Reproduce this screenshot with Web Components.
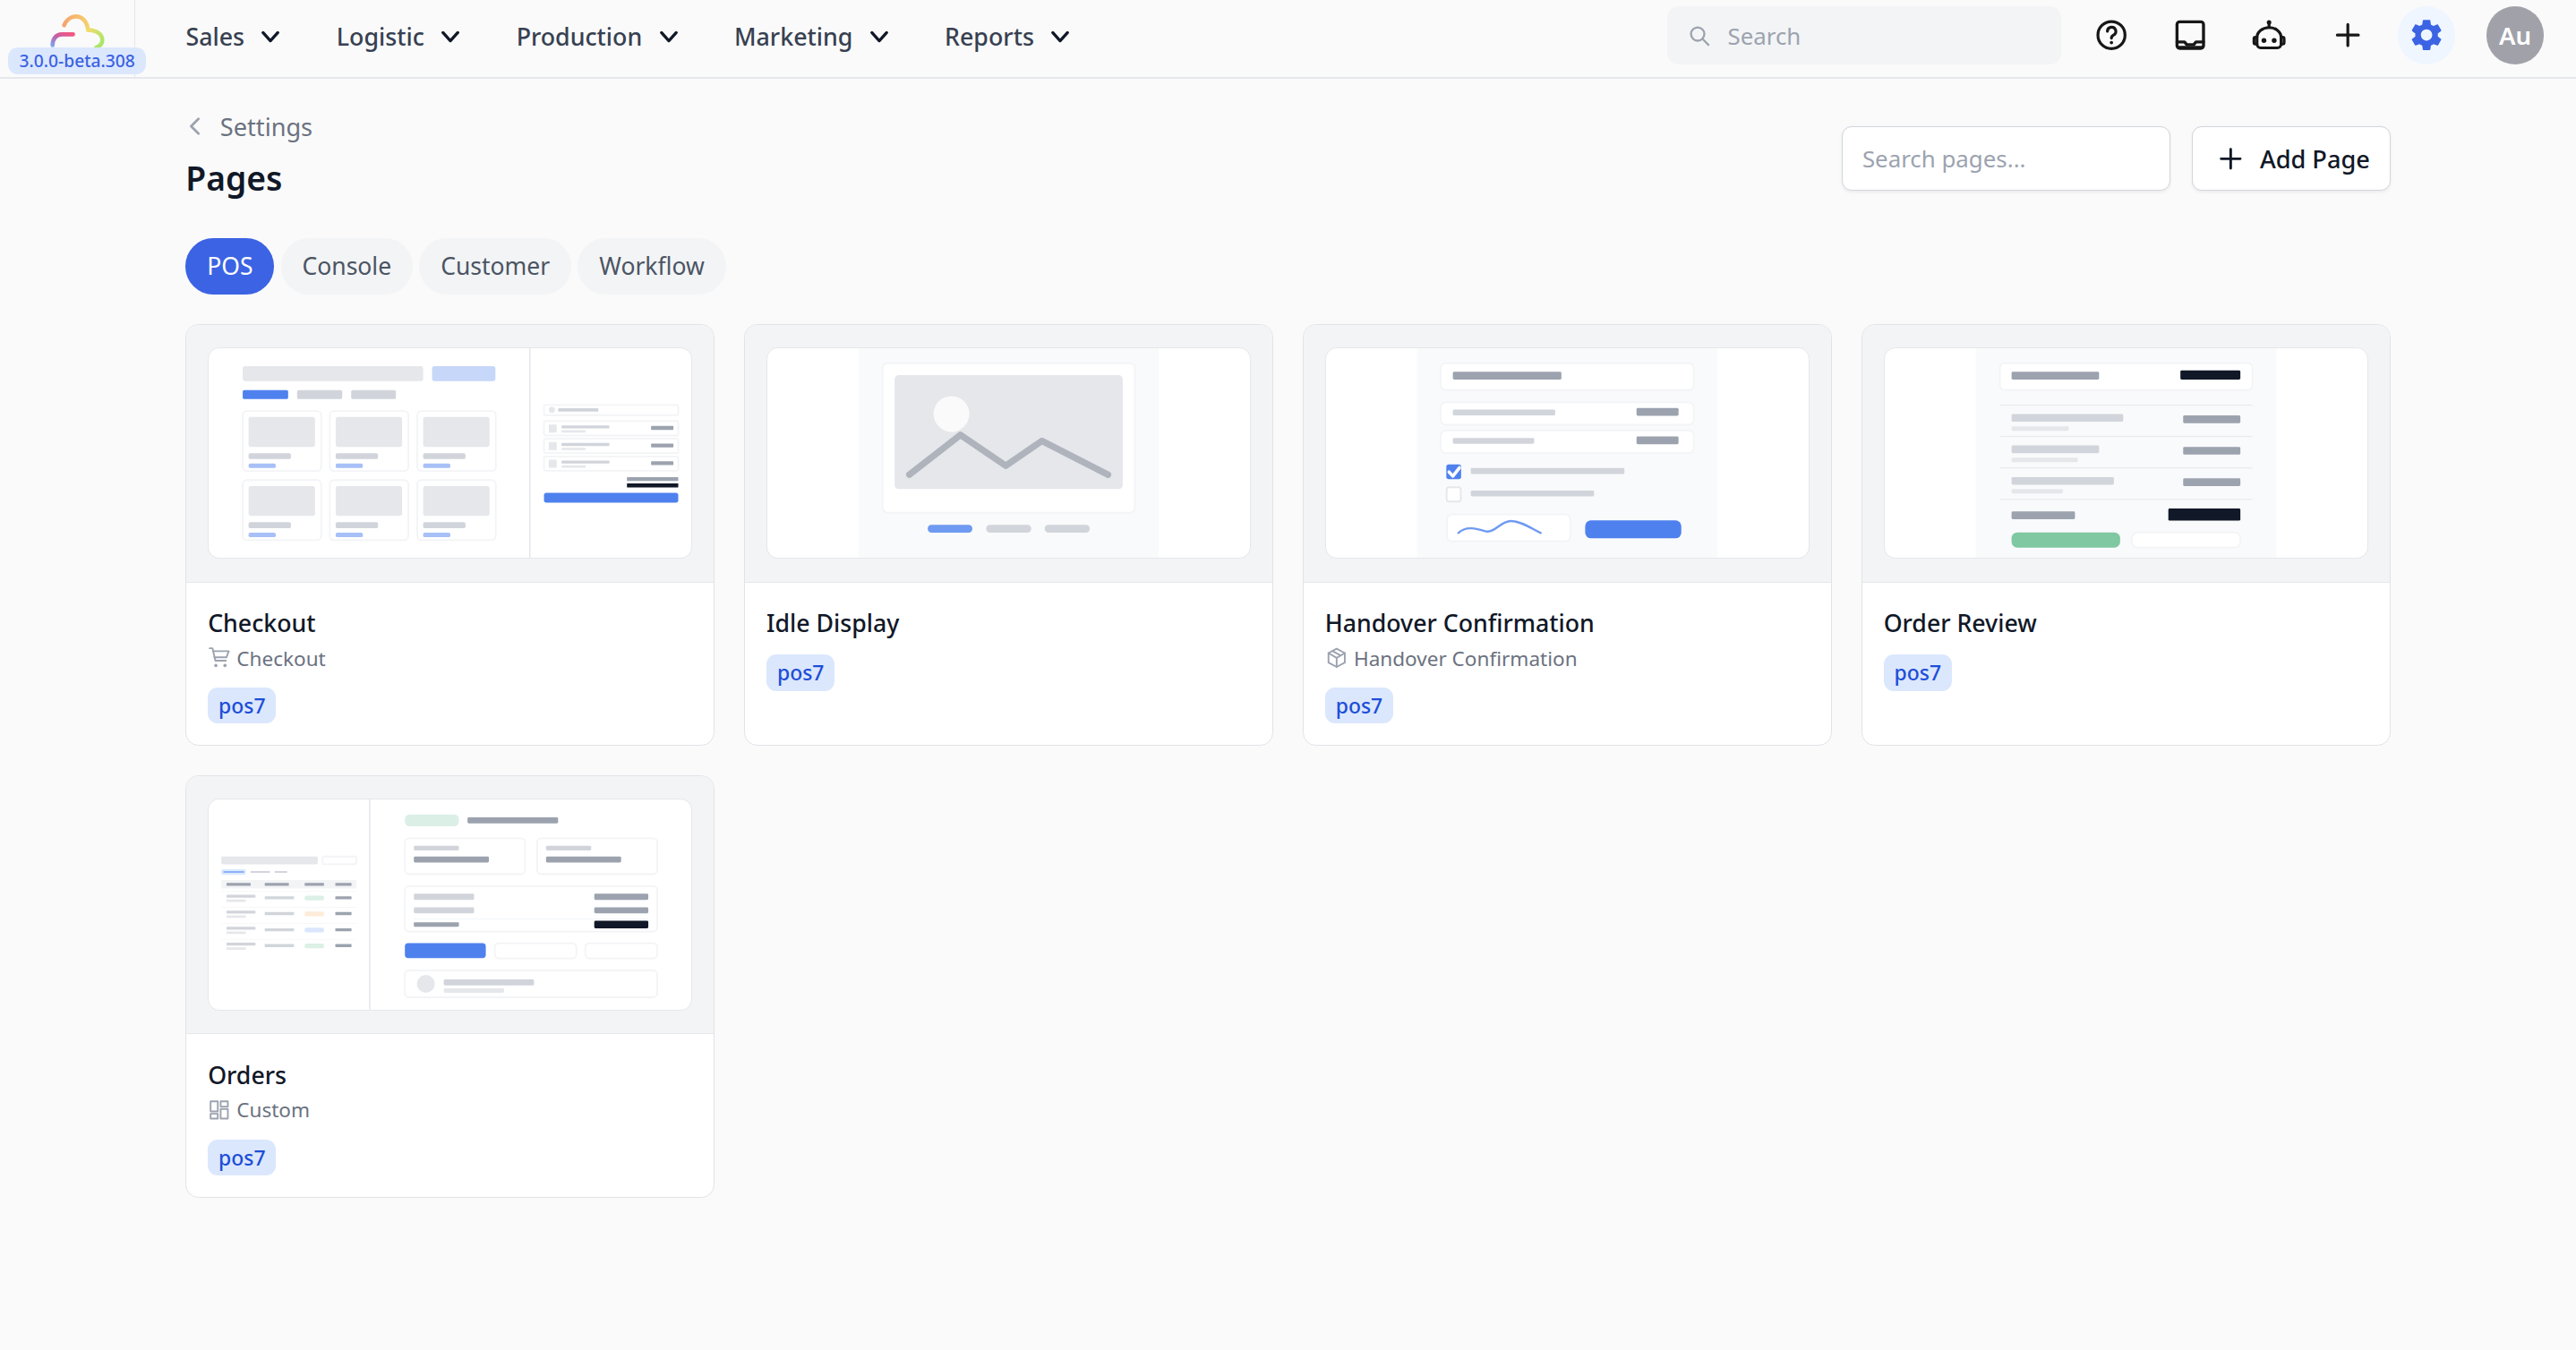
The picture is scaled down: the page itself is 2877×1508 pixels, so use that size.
<!DOCTYPE html>
<html lang="en">
<head>
<meta charset="utf-8">
<title>Pages</title>
<style>
  html { zoom: 1.8348; }
  body {
    margin: 0;
    background: #fafafa;
    color: #111827;
    font-family: "Noto Sans", "Liberation Sans", sans-serif;
  }
</style>
</head>
<body>
<app-header>
  <nav-item>Sales</nav-item>
  <nav-item>Logistic</nav-item>
  <nav-item>Production</nav-item>
  <nav-item>Marketing</nav-item>
  <nav-item>Reports</nav-item>
</app-header>
<pages-view>
  <tab-pill active>POS</tab-pill>
  <tab-pill>Console</tab-pill>
  <tab-pill>Customer</tab-pill>
  <tab-pill>Workflow</tab-pill>
  <page-card slot="cards" name="Checkout" sub="Checkout" icon="cart" kind="checkout">pos7</page-card>
  <page-card slot="cards" name="Idle Display" kind="idle">pos7</page-card>
  <page-card slot="cards" name="Handover Confirmation" sub="Handover Confirmation" icon="box" kind="handover">pos7</page-card>
  <page-card slot="cards" name="Order Review" kind="review">pos7</page-card>
  <page-card slot="cards" name="Orders" sub="Custom" icon="grid" kind="orders">pos7</page-card>
</pages-view>

<script>
const ICONS = {
  help: '<circle cx="12" cy="12" r="9"/><path d="M9.300 9.500a2.800 2.800 0 1 1 4.100 2.500c-.9.5-1.400 1-1.400 2"/><circle cx="12" cy="17" r="1.100" fill="currentColor" stroke="none"/>',
  inbox: '<rect x="3.200" y="3.200" width="17.600" height="17.600" rx="1.800"/><path d="M3.200 16.600h5l1.500 1.800h4.600l1.500-1.800h5"/><path d="M4 20.200h16" stroke-width="2"/>',
  robot: '<circle cx="12" cy="3.600" r="1.500" fill="currentColor" stroke="none"/><path d="M12 4.500V7"/><path d="M6.500 20.500h11a2.500 2.500 0 0 0 2.500-2.500v-4.500a8 6.500 0 0 0-16 0V18a2.500 2.500 0 0 0 2.500 2.500z"/><path d="M4 13.500H3a1 1 0 0 0-1 1V17a1 1 0 0 0 1 1h1M20 13.500h1a1 1 0 0 1 1 1V17a1 1 0 0 1-1 1h-1"/><circle cx="8.600" cy="15.600" r="1.600" fill="currentColor" stroke="none"/><circle cx="15.400" cy="15.600" r="1.600" fill="currentColor" stroke="none"/>',
  plus: '<path d="M12 5v14M5 12h14"/>',
  search: '<circle cx="10.500" cy="10.500" r="6.500"/><path d="M15.500 15.500 21 21"/>',
  cart: '<path d="M2 2h3l3 13h11"/><path d="M5.500 5H22l-2.500 6.500H7"/><circle cx="8.500" cy="20" r="1.700" fill="currentColor" stroke="none"/><circle cx="18" cy="20" r="1.700" fill="currentColor" stroke="none"/>',
  box: '<path d="M12 2.500 20.500 7v10L12 21.500 3.500 17V7z"/><path d="M3.500 7 12 12l8.500-5M12 12v9.500M7.500 4.800 16 9.500"/>',
  grid: '<rect x="3" y="3" width="7.500" height="10.500"/><rect x="13.500" y="3" width="7.500" height="5.500"/><rect x="13.500" y="11" width="7.500" height="10"/><rect x="3" y="16" width="7.500" height="5"/>'
};

function icon(name, size, width) {
  return `<svg width="${size}" height="${size}" viewBox="0 0 24 24" fill="none" stroke="currentColor" stroke-width="${width}" stroke-linecap="round" stroke-linejoin="round">${ICONS[name]}</svg>`;
}

const GEAR = 'M19.14 12.94c.04-.3.06-.61.06-.94 0-.32-.02-.64-.07-.94l2.03-1.58c.18-.14.23-.41.12-.61l-1.92-3.32c-.12-.22-.37-.29-.59-.22l-2.39.96c-.5-.38-1.03-.7-1.62-.94l-.36-2.54c-.04-.24-.24-.41-.48-.41h-3.84c-.24 0-.43.17-.47.41l-.36 2.54c-.59.24-1.13.57-1.62.94l-2.39-.96c-.22-.08-.47 0-.59.22L2.74 8.87c-.12.21-.08.47.12.61l2.03 1.58c-.05.3-.09.63-.09.94s.02.64.07.94l-2.03 1.58c-.18.14-.23.41-.12.61l1.92 3.32c.12.22.37.29.59.22l2.39-.96c.5.38 1.03.7 1.62.94l.36 2.54c.05.24.24.41.48.41h3.84c.24 0 .44-.17.47-.41l.36-2.54c.59-.24 1.13-.56 1.62-.94l2.39.96c.22.08.47 0 .59-.22l1.92-3.32c.12-.22.07-.47-.12-.61l-2.01-1.58zM12 15.6c-1.98 0-3.6-1.62-3.6-3.6s1.62-3.6 3.6-3.6 3.6 1.62 3.6 3.6-1.62 3.6-3.6 3.6z';

class NavItem extends HTMLElement {
  constructor() {
    super();
    this.attachShadow({mode: 'open'}).innerHTML = `
      <style>
        :host { display: inline-flex; align-items: center; gap: 10px; color: #374151; font-size: 14.600px; font-weight: 500; line-height: 20px; }
        svg { display: block; }
      </style>
      <slot></slot>
      <svg width="12" height="12" viewBox="0 0 12 12" fill="none" stroke="#111827" stroke-width="1.800" stroke-linecap="round" stroke-linejoin="round"><path d="M1.500 3.500 6 8.500l4.500-5"/></svg>`;
  }
}
customElements.define('nav-item', NavItem);

class AppHeader extends HTMLElement {
  constructor() {
    super();
    const btn = (name) => `<span class="btn">${icon(name, 22, name === 'inbox' ? 2 : 1.900)}</span>`;
    this.attachShadow({mode: 'open'}).innerHTML = `
      <style>
        :host { display: flex; align-items: flex-start; height: 47px; border-bottom: 1.200px solid #e5e7eb; box-sizing: content-box; }
        .brand { position: relative; flex: none; width: 82px; height: 47px; border-right: 1px solid #e5e7eb; }
        .brand svg { position: absolute; left: 0; top: 0; }
        .version {
          position: absolute; left: 5px; top: 29px; width: 84px; height: 16px; box-sizing: border-box;
          background: #dbe7fd; color: #3b63e3; border-radius: 6px;
          font-size: 10.500px; font-weight: 500; line-height: 16px; text-align: center;
        }
        nav { display: flex; align-items: center; gap: 34px; height: 35px; margin: 5px 0 0 30.500px; }
        .tools { display: flex; align-items: center; gap: 13px; margin: 4px 0 0 auto; padding-right: 19.500px; }
        .search {
          display: flex; align-items: center; gap: 10px; width: 240px; height: 35px; box-sizing: border-box;
          padding-left: 12px; background: #f3f4f6; border-radius: 7px; color: #9ca3af; font-size: 14.100px;
        }
        .search span { padding-top: 1px; }
        .btn { display: flex; align-items: center; justify-content: center; width: 35px; height: 35px; color: #171717; }
        .gear { background: #eff6ff; border-radius: 50%; color: #3b63e3; }
        .avatar {
          display: flex; align-items: center; justify-content: center; width: 35px; height: 35px; margin-left: 6px;
          border-radius: 50%; background: #a1a1aa; color: #fff; font-size: 15px; font-weight: 600;
        }
      </style>
      <div class="brand">
        <svg width="70" height="30" viewBox="0 0 70 30" fill="none" stroke-width="2.500" stroke-linecap="round">
          <defs>
            <linearGradient id="g1" x1="0" y1="1" x2="1" y2="0"><stop offset="0" stop-color="#7fa2ea"/><stop offset=".5" stop-color="#c45fa8"/><stop offset="1" stop-color="#f4577f"/></linearGradient>
            <linearGradient id="g2" x1="0" y1="0" x2="1" y2="0"><stop offset="0" stop-color="#f7a46f"/><stop offset="1" stop-color="#f5d06f"/></linearGradient>
            <linearGradient id="g3" x1="0" y1="0" x2="1" y2="1"><stop offset="0" stop-color="#f0dc6a"/><stop offset="1" stop-color="#9fe86a"/></linearGradient>
          </defs>
          <path d="M44.500 20.900H37.500C34 20.900 32 24 32 27.500" stroke="url(#g1)"/>
          <path d="M39 15.400C40.500 11.800 43.500 10 46.300 10C50 10 53 13 53.600 18.200" stroke="url(#g2)"/>
          <path d="M53.600 18.200C58.500 18.500 62.300 20.500 62.300 24.500C62.300 26.200 60.800 28 58.500 29" stroke="url(#g3)"/>
        </svg>
        <div class="version">3.0.0-beta.308</div>
      </div>
      <nav><slot></slot></nav>
      <div class="tools">
        <div class="search">${icon('search', 15, 2)}<span>Search</span></div>
        ${btn('help')}${btn('inbox')}${btn('robot')}${btn('plus')}
        <span class="btn gear"><svg width="23" height="23" viewBox="0 0 24 24" fill="currentColor"><path fill-rule="evenodd" d="${GEAR}"/></svg></span>
        <span class="avatar">Au</span>
      </div>`;
  }
}
customElements.define('app-header', AppHeader);

class TabPill extends HTMLElement {
  constructor() {
    super();
    this.attachShadow({mode: 'open'}).innerHTML = `
      <style>
        :host {
          display: inline-flex; align-items: center; height: 34px; padding: 0 13px; border-radius: 17px;
          background: #f3f4f6; color: #4b5563; font-size: 14.450px;
        }
        :host([active]) { background: #3b63e3; color: #fff; }
      </style>
      <slot></slot>`;
  }
}
customElements.define('tab-pill', TabPill);

// wireframe drawings: coordinates are read off the crops of each preview
const GRAY = '#e5e7eb', MID = '#d1d5db', DARK = '#9ca3af', INK = '#111827', BLUE = '#4f81ee', LINE = '#f3f4f6';

function R(x1, y1, x2, y2, fill, r = .6, stroke = '') {
  const s = stroke ? ` stroke="${stroke}" stroke-width="1" vector-effect="non-scaling-stroke"` : '';
  return `<rect x="${x1}" y="${y1}" width="${x2 - x1}" height="${y2 - y1}" rx="${r * 4.790}" ry="${r * 5.500}" fill="${fill}"${s}/>`;
}
function box(x1, y1, x2, y2, r = 2.500) { return R(x1, y1, x2, y2, '#fff', r, LINE); }
function E(cx, cy, rx, ry, fill) { return `<ellipse cx="${cx}" cy="${cy}" rx="${rx}" ry="${ry}" fill="${fill}"/>`; }
function P(d, color, w) { return `<path d="${d}" fill="none" stroke="${color}" stroke-width="${w}" stroke-linecap="round" stroke-linejoin="round" vector-effect="non-scaling-stroke"/>`; }

const THUMBS = {
  checkout() {
    let s = R(1019, 87, 1023, 790, GRAY, 0);
    s += R(187, 147, 711, 197, GRAY, 1.500) + R(737, 147, 921, 197, '#c7d7f9', 1.500);
    s += R(187, 227, 319, 257, BLUE, 1) + R(345, 227, 476, 257, MID, 1) + R(502, 227, 632, 257, MID, 1);
    for (const y of [297, 528]) for (const x of [187, 440, 694]) {
      s += box(x, y, x + 228, y + 201, 2.500);
      s += R(x + 17, y + 20, x + 210, y + 120, GRAY, 1.500);
      s += R(x + 17, y + 141, x + 140, y + 161, MID, 1);
      s += R(x + 17, y + 176, x + 96, y + 191, '#a8c0f8', 1);
    }
    s += box(1062, 277, 1452, 311, .8) + E(1085, 293, 9, 10, GRAY) + R(1103, 288, 1220, 299, MID, .5);
    for (const y of [331, 390, 449]) {
      s += box(1062, y, 1452, y + 48, .8);
      s += R(1076, y + 11, 1099, y + 38, GRAY, .5);
      s += R(1113, y + 14, 1252, y + 24, MID, .4) + R(1113, y + 30, 1183, y + 38, GRAY, .4);
      s += R(1373, y + 16, 1438, y + 29, DARK, .4);
    }
    s += R(1303, 518, 1452, 531, DARK, .3) + R(1303, 539, 1452, 553, INK, .3) + R(1062, 571, 1452, 604, BLUE, 1.500);
    return ['88 87 1402 703', s];
  },
  idle() {
    let s = R(337, 87, 1210, 790, '#f9fafb', 0) + box(407, 137, 1140, 637, 3);
    s += R(442, 177, 1105, 558, GRAY, 2.500) + E(607, 307, 52, 60, '#fafafa');
    s += P('M485 510 633 377 765 480 870 397 1062 510', '#afb4bc', 4);
    s += R(538, 678, 668, 704, '#6f9af1', 2.300) + R(708, 678, 839, 704, MID, 2.300) + R(878, 678, 1009, 704, MID, 2.300);
    return ['72 87 1403 703', s];
  },
  handover() {
    let s = R(348, 87, 1220, 790, '#f9fafb', 0);
    s += box(417, 137, 1151, 227, 3) + R(452, 166, 767, 192, DARK, .8);
    s += box(417, 268, 1151, 343, 3) + R(452, 292, 749, 312, MID, .8) + R(985, 287, 1107, 313, DARK, .8);
    s += box(417, 362, 1151, 438, 3) + R(452, 387, 688, 407, MID, .8) + R(985, 382, 1107, 408, DARK, .8);
    s += R(433, 476, 476, 525, BLUE, 1.500) + P('M441 501 452 515 471 487', '#fff', 2);
    s += R(504, 488, 950, 508, MID, .8);
    s += R(434, 552, 475, 600, '#fff', 1.500, GRAY) + R(504, 563, 862, 583, MID, .8);
    s += box(435, 643, 793, 733, 3);
    s += P('M468 705C490 680 520 690 548 700C575 705 590 665 620 665C650 665 680 690 707 705', '#6f9af1', 1.300);
    s += R(836, 663, 1115, 723, BLUE, 3.500);
    return ['84 87 1401 703', s];
  },
  review() {
    let s = R(345, 87, 1218, 790, '#f9fafb', 0);
    s += box(415, 137, 1148, 227, 3) + R(449, 166, 703, 192, DARK, .8) + R(939, 161, 1113, 192, INK, .8);
    for (const y of [277, 382, 487, 592]) s += R(415, y - 1, 1148, y + 2, GRAY, 0);
    s += R(449, 307, 773, 333, MID, .8) + R(449, 348, 615, 363, GRAY, .8) + R(947, 312, 1113, 338, DARK, .8);
    s += R(449, 412, 703, 438, MID, .8) + R(449, 453, 641, 468, GRAY, .8) + R(947, 417, 1113, 443, DARK, .8);
    s += R(449, 518, 746, 544, MID, .8) + R(449, 558, 598, 573, GRAY, .8) + R(947, 522, 1113, 548, DARK, .8);
    s += R(449, 633, 633, 659, DARK, .8) + R(904, 623, 1113, 664, INK, .8);
    s += R(449, 703, 764, 754, '#7fc8a2', 3.500) + box(798, 703, 1113, 754, 3.500);
    return ['81 87 1401 703', s];
  },
  orders() {
    let s = R(554, 99, 558, 802, GRAY, 0);
    s += R(125, 290, 405, 316, GRAY, .8) + box(419, 290, 517, 316, .8);
    s += R(125, 333, 196, 351, '#dbeafe', .8) + R(131, 339, 191, 345, '#8fb0f6', .2);
    s += R(210, 339, 266, 345, MID, .2) + R(280, 339, 316, 345, MID, .2);
    s += R(125, 369, 517, 397, LINE, 0);
    for (const [a, b] of [[140, 210], [251, 321], [367, 423], [456, 503]]) s += R(a, 378, b, 388, DARK, .3);
    const pills = ['#dcf0e6', '#fdecd8', '#dbe6fd', '#dcf0e6'];
    [418, 471, 525, 578].forEach((y, i) => {
      s += R(125, y - 12, 517, y - 10, LINE, 0);
      s += R(140, y, 224, y + 10, MID, .3) + R(140, y + 16, 196, y + 24, GRAY, .3);
      s += R(251, y + 5, 336, y + 15, MID, .3) + R(367, y + 3, 423, y + 19, pills[i], 1) + R(456, y + 5, 503, y + 15, DARK, .3);
    });
    s += R(658, 149, 815, 189, '#dcefe6', 3) + R(840, 159, 1103, 179, DARK, .8);
    s += box(658, 229, 1007, 349, 2.500) + R(684, 254, 815, 270, MID, .8) + R(684, 290, 902, 310, DARK, .8);
    s += box(1042, 229, 1391, 349, 2.500) + R(1068, 254, 1199, 270, MID, .8) + R(1068, 290, 1286, 310, DARK, .8);
    s += box(658, 389, 1391, 541, 2.500);
    s += R(684, 414, 859, 435, MID, .8) + R(1208, 414, 1365, 435, DARK, .8);
    s += R(684, 460, 859, 480, MID, .8) + R(1208, 460, 1365, 480, DARK, .8);
    s += R(684, 497, 1365, 500, LINE, 0) + R(684, 510, 815, 525, DARK, .6) + R(1208, 505, 1365, 530, INK, .8);
    s += R(658, 580, 893, 630, BLUE, 2) + box(919, 580, 1156, 631, 2.500) + box(1182, 580, 1391, 631, 2.500);
    s += box(658, 671, 1391, 761, 2.500) + E(719, 716, 26, 30, GRAY);
    s += R(771, 701, 1033, 721, MID, .8) + R(771, 731, 946, 746, GRAY, .8);
    return ['88 99 1402 703', s];
  }
};

class PageCard extends HTMLElement {
  connectedCallback() {
    const [view, shapes] = THUMBS[this.getAttribute('kind')]();
    const sub = this.getAttribute('sub');
    this.attachShadow({mode: 'open'}).innerHTML = `
      <style>
        :host {
          display: block; height: 257px; box-sizing: border-box; overflow: hidden;
          background: #fff; border: 1px solid #e1e3e8; border-radius: 8px;
        }
        .preview { height: 157px; box-sizing: border-box; padding: 13.600px 13px 0; background: #f3f4f6; border-bottom: 1px solid #e5e7eb; }
        .frame { height: 129px; box-sizing: border-box; overflow: hidden; background: #fff; border: 1px solid #e5e7eb; border-radius: 7px; }
        .frame svg { display: block; width: 100%; height: 100%; }
        .body { padding: 15px 13px 0; }
        h3 { margin: 0; font-size: 14.550px; font-weight: 500; line-height: 20px; color: #111827; }
        .sub { display: flex; align-items: center; gap: 3.500px; height: 18px; margin-top: 2px; color: #6b7280; font-size: 12.300px; }
        .sub svg { color: #9ca3af; }
        .tag {
          display: inline-block; height: 22px; margin-top: 9px; padding: 0 6.500px; border-radius: 6px;
          background: #dbe7fd; color: #1d4ed8; font-size: 12.500px; font-weight: 500; line-height: 22px;
        }
      </style>
      <div class="preview"><div class="frame">
        <svg viewBox="${view}" preserveAspectRatio="none">${shapes}</svg>
      </div></div>
      <div class="body">
        <h3>${this.getAttribute('name')}</h3>
        ${sub ? `<div class="sub">${icon(this.getAttribute('icon'), 14, 1.800)}<span>${sub}</span></div>` : ''}
        <span class="tag"><slot></slot></span>
      </div>`;
  }
}
customElements.define('page-card', PageCard);

class PagesView extends HTMLElement {
  constructor() {
    super();
    this.attachShadow({mode: 'open'}).innerHTML = `
      <style>
        :host { display: block; padding: 19px 113px 0; }
        .head { display: flex; justify-content: space-between; }
        .crumb { display: flex; align-items: center; gap: 9px; height: 20px; color: #6b7280; font-size: 14.800px; }
        h1 { margin: 7px 0 0; font-size: 20.300px; font-weight: 600; line-height: 28px; color: #111827; }
        .actions { display: flex; gap: 13px; margin-top: 10px; }
        .field, .add {
          display: flex; align-items: center; height: 39px; box-sizing: border-box; background: #fff;
          border: 1px solid #d1d5db; border-radius: 6px; box-shadow: 0 1px 2px rgba(0,0,0,.06);
        }
        .field { width: 200px; padding-left: 12px; color: #9ca3af; font-size: 14.100px; }
        .add { width: 121px; gap: 8px; padding: 0 0 0 13px; color: #111827; font-size: 14.800px; font-weight: 500; }
        .tabs { display: flex; gap: 4px; margin-top: 23px; }
        .grid { display: grid; grid-template-columns: repeat(4, 1fr); grid-auto-rows: 257px; gap: 18px; margin-top: 18px; }
      </style>
      <div class="head">
        <div>
          <div class="crumb">
            <svg width="12" height="12" viewBox="0 0 12 12" fill="none" stroke="#9ca3af" stroke-width="1.500" stroke-linecap="round" stroke-linejoin="round"><path d="M8 1.500 3.500 6 8 10.500"/></svg>
            <span>Settings</span>
          </div>
          <h1>Pages</h1>
        </div>
        <div class="actions">
          <div class="field">Search pages...</div>
          <div class="add">${icon('plus', 20, 1.900)}<span>Add Page</span></div>
        </div>
      </div>
      <div class="tabs"><slot></slot></div>
      <div class="grid"><slot name="cards"></slot></div>`;
  }
}
customElements.define('pages-view', PagesView);
</script>
</body>
</html>
